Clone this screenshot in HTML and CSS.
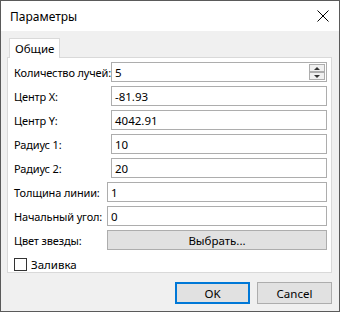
FILE: index.html
```html
<!DOCTYPE html>
<html lang="ru">
<head>
  <meta charset="UTF-8" />
  <title>Параметры</title>
  <link rel="stylesheet" href="styles.css">
</head>
<body>

  <div class="window">

    <div class="titlebar">
      <span class="title">Параметры</span>
      <svg class="close" width="12" height="12" viewBox="0 0 12 12">
        <path d="M0.5 0.5 L11.5 11.5 M11.5 0.5 L0.5 11.5" stroke="#000" stroke-width="1" fill="none" />
      </svg>
    </div>

    <div class="content">

      <div class="tabs">
        <div class="tab">Общие</div>
      </div>

      <div class="panel">
        <div class="row">
          <label>Количество лучей:</label>
          <div class="field spin">
            <span>5</span>
            <div class="spin-buttons">
              <div class="spin-btn"><span class="arrow-up"></span></div>
              <div class="spin-btn"><span class="arrow-down"></span></div>
            </div>
          </div>
        </div>
        <div class="row">
          <label>Центр X:</label>
          <div class="field">-81.93</div>
        </div>
        <div class="row">
          <label>Центр Y:</label>
          <div class="field">4042.91</div>
        </div>
        <div class="row">
          <label>Радиус 1:</label>
          <div class="field">10</div>
        </div>
        <div class="row">
          <label>Радиус 2:</label>
          <div class="field">20</div>
        </div>
        <div class="row wide">
          <label>Толщина линии:</label>
          <div class="field">1</div>
        </div>
        <div class="row wide">
          <label>Начальный угол:</label>
          <div class="field">0</div>
        </div>
        <div class="row wide">
          <label>Цвет звезды:</label>
          <div class="pick">Выбрать...</div>
        </div>
        <div class="check-row">
          <span class="checkbox"></span>
          <span>Заливка</span>
        </div>
      </div>

      <div class="actions">
        <div class="btn default">OK</div>
        <div class="btn">Cancel</div>
      </div>

    </div>
  </div>

</body>
</html>
```

FILE: styles.css
```css
:root {
  --fundo: #f0f0f0;
  --borda-campo: #adadad;
  --borda-painel: #d9d9d9;
  --botao: #e1e1e1;
  --azul: #0078d7;
}

* {
  box-sizing: border-box;
}

body {
  margin: 0;
  font-family: "Noto Sans", "Open Sans", sans-serif;
  font-size: 11.5px;
  color: #000;
  background: #fff;
}

.window {
  width: 340px;
  height: 312px;
  border: 1px solid #5a5a5a;
  background: var(--fundo);
  display: flex;
  flex-direction: column;
}

.titlebar {
  height: 30px;
  background: #fff;
  display: flex;
  align-items: center;
  justify-content: space-between;
  padding: 0 10px 0 9px;
  font-size: 12px;
}

.close {
  display: block;
}

.content {
  padding: 7px 7px 0 6px;
  flex: 1;
}

.tabs {
  display: flex;
  padding-left: 2px;
}

.tab {
  height: 20px;
  width: 51px;
  background: #fff;
  border: 1px solid var(--borda-painel);
  border-bottom: none;
  padding: 2px 0 0 5px;
  margin-bottom: -1px;
  position: relative;
}

.panel {
  height: 216px;
  background: #fff;
  border: 1px solid var(--borda-painel);
  padding: 4px 5px 0 6px;
  display: flex;
  flex-direction: column;
  gap: 4px;
}

.row {
  display: grid;
  grid-template-columns: 97px 216px;
  align-items: center;
  height: 20px;
}

.row label {
  white-space: nowrap;
  font-size: 11px;
  letter-spacing: -0.15px;
}

.row.wide {
  grid-template-columns: 93px 220px;
}

.row.wide:first-of-type {
  margin-top: 1px;
}

.field {
  height: 20px;
  border: 1px solid var(--borda-campo);
  background: #fff;
  padding: 0 3px;
  display: flex;
  align-items: center;
}

.field.spin {
  justify-content: space-between;
  padding-right: 1px;
}

.spin-buttons {
  display: flex;
  flex-direction: column;
  width: 16px;
  height: 16px;
}

.spin-btn {
  flex: 1;
  border: 1px solid var(--borda-campo);
  background: #f0f0f0;
  display: flex;
  align-items: center;
  justify-content: center;
}

.arrow-up, .arrow-down {
  width: 0;
  height: 0;
  border-left: 3px solid transparent;
  border-right: 3px solid transparent;
}

.arrow-up {
  border-bottom: 3px solid #333;
}

.arrow-down {
  border-top: 3px solid #333;
}

.pick {
  height: 20px;
  background: var(--botao);
  border: 1px solid var(--borda-campo);
  display: flex;
  align-items: center;
  justify-content: center;
}

.check-row {
  display: flex;
  align-items: center;
  gap: 4px;
  height: 13px;
  margin-top: 4px;
}

.checkbox {
  width: 13px;
  height: 13px;
  border: 1px solid #333;
  background: #fff;
}

.actions {
  display: flex;
  justify-content: flex-end;
  gap: 7px;
  padding-top: 9px;
}

.btn {
  width: 75px;
  height: 22px;
  background: var(--botao);
  border: 1px solid var(--borda-campo);
  display: flex;
  align-items: center;
  justify-content: center;
}

.btn.default {
  border: 2px solid var(--azul);
}
```
